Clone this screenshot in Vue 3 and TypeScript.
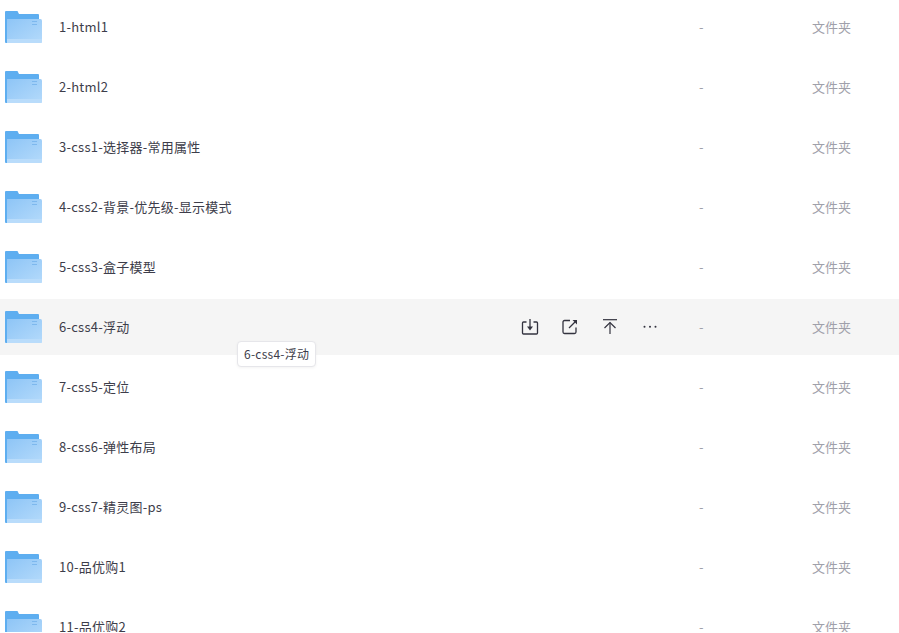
<script setup lang="ts">
import { ref } from "vue";

const folders = ref([
  "1-html1",
  "2-html2",
  "3-css1-选择器-常用属性",
  "4-css2-背景-优先级-显示模式",
  "5-css3-盒子模型",
  "6-css4-浮动",
  "7-css5-定位",
  "8-css6-弹性布局",
  "9-css7-精灵图-ps",
  "10-品优购1",
  "11-品优购2",
]);
const hovered = 5;
</script>

<template>
  <div class="file-list">
    <div v-for="(name, i) of folders" :key="name" class="row" :class="i === hovered ? 'active' : ''">
      <svg class="folder" width="37" height="34" viewBox="0 0 37 34">
        <defs>
          <linearGradient id="front" x1="0" y1="0" x2="1" y2="1">
            <stop offset="0" stop-color="#8ec5f6" />
            <stop offset="1" stop-color="#b4dafb" />
          </linearGradient>
        </defs>
        <path d="M0 2a1 1 0 0 1 1-1h11.500l1.500 3H33a1 1 0 0 1 1 1v5H0Z" fill="#5eaef0" />
        <path d="M0 6h2v27H1a1 1 0 0 1-1-1Z" fill="#5eaef0" />
        <path d="M2 9h33.500a1.500 1.500 0 0 1 1.500 1.500V31.500a1.500 1.500 0 0 1-1.500 1.500H2Z" fill="url(#front)" />
        <path d="M2 29h35v2.500a1.500 1.500 0 0 1-1.500 1.500H2Z" fill="#b9dcfb" />
        <path d="M27 11.500h5M27 14.500h5" stroke="#7db8ee" stroke-width="1" />
      </svg>
      <span class="name">{{ name }}</span>
      <div v-if="i === hovered" class="actions">
        <svg width="20" height="20" viewBox="0 0 20 20" fill="none" stroke="#33333f" stroke-width="1.300">
          <path d="M6.500 5H3.500a1 1 0 0 0-1 1v10a1 1 0 0 0 1 1h13a1 1 0 0 0 1-1V6a1 1 0 0 0-1-1h-3" />
          <path d="M10 2v8" />
          <path d="M7 9.500h6L10 13.500Z" fill="#33333f" stroke="none" />
        </svg>
        <svg width="20" height="20" viewBox="0 0 20 20" fill="none" stroke="#33333f" stroke-width="1.300">
          <path d="M10 3.500H4.500A1.500 1.500 0 0 0 3 5v10a1.500 1.500 0 0 0 1.500 1.500h10A1.500 1.500 0 0 0 16 15v-4.500" />
          <path d="M9 11 15 5" />
          <path d="M12.500 3h4.500v4.500Z" fill="#33333f" stroke="none" />
        </svg>
        <svg width="20" height="20" viewBox="0 0 20 20" fill="none" stroke="#33333f" stroke-width="1.200">
          <path d="M3 2.700h14" />
          <path d="M10 17V5.500" />
          <path d="M4.500 11 10 5.500l5.500 5.500" />
        </svg>
        <svg width="20" height="20" viewBox="0 0 20 20" fill="#33333f">
          <circle cx="4.500" cy="9.800" r="1" />
          <circle cx="10" cy="9.800" r="1" />
          <circle cx="15.500" cy="9.800" r="1" />
        </svg>
      </div>
      <span class="size">-</span>
      <span class="type">文件夹</span>
      <div v-if="i === hovered" class="tooltip">{{ name }}</div>
    </div>
  </div>
</template>

<style scoped>
.file-list {
  height: 633px;
  overflow: hidden;
  margin-top: -1px;
  font-family: "Noto Sans CJK SC", "Open Sans", sans-serif;
  font-size: 13px;
  color: #3d3d4a;
}

.row {
  position: relative;
  display: flex;
  align-items: center;
  height: 56px;
  margin-bottom: 4px;
  padding-left: 5px;
}

.row.active {
  background-color: #f5f5f5;
}

.folder {
  flex: none;
}

.name {
  margin-left: 17px;
  margin-top: -2px;
  flex: 1;
  letter-spacing: 0.25px;
}

.actions {
  display: flex;
  gap: 20px;
  margin-right: 39px;
}

.size {
  width: 113px;
  margin-top: -2px;
  color: #a0a0aa;
}

.type {
  width: 87px;
  margin-top: -2px;
  color: #a0a0aa;
}

.tooltip {
  position: absolute;
  left: 237px;
  top: 42px;
  height: 26px;
  line-height: 23px;
  padding: 0 6px;
  box-sizing: border-box;
  background: #fff;
  border: 1px solid #e6e6ea;
  border-radius: 4px;
  box-shadow: 0 1px 3px rgba(0, 0, 0, 0.05);
  font-size: 12px;
  letter-spacing: 0.25px;
  white-space: nowrap;
  z-index: 1;
}
</style>

<style>
html, body {
  margin: 0;
  overflow: hidden;
  background: #fff;
}
</style>
